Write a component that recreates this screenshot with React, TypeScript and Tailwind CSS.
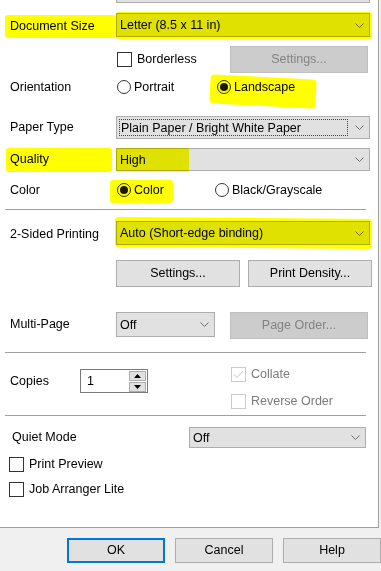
import React from "react";

const FONT = "font-['Liberation_Sans',Arial,sans-serif] text-[12.5px] text-black";

function Chevron() {
  return (
    <svg width="9" height="5" viewBox="0 0 9 5" className="shrink-0">
      <polyline points="0.5,0.5 4.5,4.5 8.5,0.5" fill="none" stroke="#6d6d6d" strokeWidth="1" />
    </svg>
  );
}

function Select({ value, className, focus }: { value: string; className: string; focus?: boolean }) {
  return (
    <div className={`flex items-center justify-between border border-[#adadad] bg-[#e1e1e1] pr-[5px] ${className}`}>
      {focus ? (
        <span className="ml-[2px] flex h-[calc(100%-4px)] w-[229px] items-center border border-dotted border-[#444] pt-px pl-[1px] leading-none">
          {value}
        </span>
      ) : (
        <span className="pt-px pl-[3px] leading-none">{value}</span>
      )}
      <Chevron />
    </div>
  );
}

function Btn({ label, className, disabled }: { label: string; className: string; disabled?: boolean }) {
  return (
    <div
      className={`flex items-center justify-center border ${
        disabled ? "border-[#bfbfbf] bg-[#cccccc] text-[#838383]" : "border-[#adadad] bg-[#e1e1e1]"
      } ${className}`}
    >
      {label}
    </div>
  );
}

function Radio({ checked }: { checked?: boolean }) {
  return (
    <span className="flex h-[14px] w-[14px] shrink-0 items-center justify-center rounded-full border border-[#333] bg-white">
      {checked && <span className="h-[8px] w-[8px] rounded-full bg-[#1a1a1a]" />}
    </span>
  );
}

function Check({ disabled, checked }: { disabled?: boolean; checked?: boolean }) {
  return (
    <span
      className={`flex h-[15px] w-[15px] shrink-0 items-center justify-center border bg-white ${
        disabled ? "border-[#cccccc]" : "border-[#333]"
      }`}
    >
      {checked && (
        <svg width="11" height="9" viewBox="0 0 11 9">
          <polyline points="1,4.5 4,7.5 10,1" fill="none" stroke="#c4c4c4" strokeWidth="1" />
        </svg>
      )}
    </span>
  );
}

function Sep({ className }: { className: string }) {
  return <div className={`ml-[5px] h-px w-[361px] bg-[#a0a0a0] ${className}`} />;
}

function Marker({ className }: { className: string }) {
  return <div className={`pointer-events-none absolute bg-[#ffff00] mix-blend-multiply ${className}`} />;
}

export default function App() {
  return (
    <div className={`relative h-[571px] w-[381px] overflow-hidden bg-[#f0f0f0] ${FONT}`}>
      {/* settings panel */}
      <div className="relative flex h-[528px] w-[379px] flex-col border-r border-b border-[#a0a0a0] bg-white">
        <div className="ml-[116px] h-[3px] w-[254px] border-x border-b border-[#adadad] bg-[#e1e1e1]" />

        <div className="mt-[10px] flex h-[24px] items-center">
          <span className="w-[116px] pt-[2px] pl-[10px]">Document Size</span>
          <Select value="Letter (8.5 x 11 in)" className="h-[24px] w-[254px]" />
        </div>

        <div className="mt-[9px] flex h-[27px] items-center">
          <div className="ml-[117px] flex w-[113px] items-center gap-[5px]">
            <Check />
            <span>Borderless</span>
          </div>
          <Btn label="Settings..." disabled className="h-[27px] w-[138px]" />
        </div>

        <div className="mt-[6px] flex h-[16px] items-center">
          <span className="w-[117px] pl-[10px]">Orientation</span>
          <div className="flex w-[100px] items-center gap-[3px]">
            <Radio />
            <span>Portrait</span>
          </div>
          <div className="flex items-center gap-[3px]">
            <Radio checked />
            <span>Landscape</span>
          </div>
        </div>

        <div className="mt-[21px] flex h-[23px] items-center">
          <span className="w-[116px] pl-[10px]">Paper Type</span>
          <Select value="Plain Paper / Bright White Paper" focus className="h-[23px] w-[254px]" />
        </div>

        <div className="mt-[9px] flex h-[23px] items-center">
          <span className="w-[116px] pl-[10px]">Quality</span>
          <Select value="High" className="h-[23px] w-[254px]" />
        </div>

        <div className="mt-[11px] flex h-[16px] items-center">
          <span className="w-[117px] pl-[10px]">Color</span>
          <div className="flex w-[98px] items-center gap-[3px]">
            <Radio checked />
            <span>Color</span>
          </div>
          <div className="flex items-center gap-[3px]">
            <Radio />
            <span>Black/Grayscale</span>
          </div>
        </div>

        <Sep className="mt-[11px]" />

        <div className="mt-[11px] flex h-[24px] items-center">
          <span className="w-[116px] pt-[2px] pl-[10px]">2-Sided Printing</span>
          <Select value="Auto (Short-edge binding)" className="h-[24px] w-[254px]" />
        </div>

        <div className="mt-[15px] flex h-[27px] items-center gap-[8px] pl-[116px]">
          <Btn label="Settings..." className="h-[27px] w-[124px]" />
          <Btn label="Print Density..." className="h-[27px] w-[124px]" />
        </div>

        <div className="mt-[25px] flex h-[27px] items-start">
          <span className="flex h-[25px] w-[116px] items-center pl-[10px]">Multi-Page</span>
          <Select value="Off" className="h-[25px] w-[99px]" />
          <Btn label="Page Order..." disabled className="ml-[15px] h-[27px] w-[138px]" />
        </div>

        <Sep className="mt-[13px]" />

        <div className="mt-[12px] flex h-[39px] items-start">
          <div className="mt-[4px] flex h-[24px] items-center">
            <span className="w-[80px] pl-[10px]">Copies</span>
            <div className="flex h-[24px] w-[68px] items-center justify-between border border-[#7a7a7a] bg-white pr-[1px]">
              <span className="pl-[6px]">1</span>
              <div className="flex flex-col gap-px">
                <div className="flex h-[10px] w-[17px] items-center justify-center border border-[#adadad] bg-[#e1e1e1]">
                  <svg width="7" height="4" viewBox="0 0 7 4">
                    <polygon points="0,4 3.5,0 7,4" fill="#000" />
                  </svg>
                </div>
                <div className="flex h-[10px] w-[17px] items-center justify-center border border-[#adadad] bg-[#e1e1e1]">
                  <svg width="7" height="4" viewBox="0 0 7 4">
                    <polygon points="0,0 3.5,4 7,0" fill="#000" />
                  </svg>
                </div>
              </div>
            </div>
          </div>
          <div className="ml-[83px] flex flex-col gap-[8px] text-[#7a7a7a]">
            <div className="flex items-center gap-[5px]">
              <Check disabled checked />
              <span>Collate</span>
            </div>
            <div className="flex items-center gap-[5px]">
              <Check disabled />
              <span>Reverse Order</span>
            </div>
          </div>
        </div>

        <Sep className="mt-[11px]" />

        <div className="mt-[11px] flex h-[21px] items-center">
          <span className="w-[189px] pl-[12px]">Quiet Mode</span>
          <Select value="Off" className="h-[21px] w-[177px]" />
        </div>

        <div className="mt-[9px] flex h-[15px] items-center gap-[5px] pl-[9px]">
          <Check />
          <span>Print Preview</span>
        </div>

        <div className="mt-[10px] flex h-[15px] items-center gap-[5px] pl-[9px]">
          <Check />
          <span>Job Arranger Lite</span>
        </div>

        {/* highlighter marks */}
        <Marker className="left-[5px] top-[15px] h-[23px] w-[111px] rounded-[3px]" />
        <Marker className="left-[116px] top-[12px] h-[27px] w-[256px] rounded-[3px]" />
        <Marker className="left-[210px] top-[77px] h-[29px] w-[106px] rotate-[3deg] rounded-[4px]" />
        <Marker className="left-[6px] top-[148px] h-[24px] w-[106px] rounded-[3px]" />
        <Marker className="left-[116px] top-[148px] h-[24px] w-[73px] rounded-[2px]" />
        <Marker className="left-[110px] top-[180px] h-[23px] w-[63px] rounded-[3px]" />
        <Marker className="left-[115px] top-[218px] h-[30px] w-[257px] rotate-[0.5deg] rounded-[4px]" />
      </div>

      <div className="mt-[10px] flex gap-[10px] pl-[67px]">
        <div className="flex h-[25px] w-[98px] items-center justify-center border-2 border-[#0078d7] bg-[#e1e1e1]">OK</div>
        <Btn label="Cancel" className="h-[25px] w-[98px]" />
        <Btn label="Help" className="h-[25px] w-[98px]" />
      </div>
    </div>
  );
}
